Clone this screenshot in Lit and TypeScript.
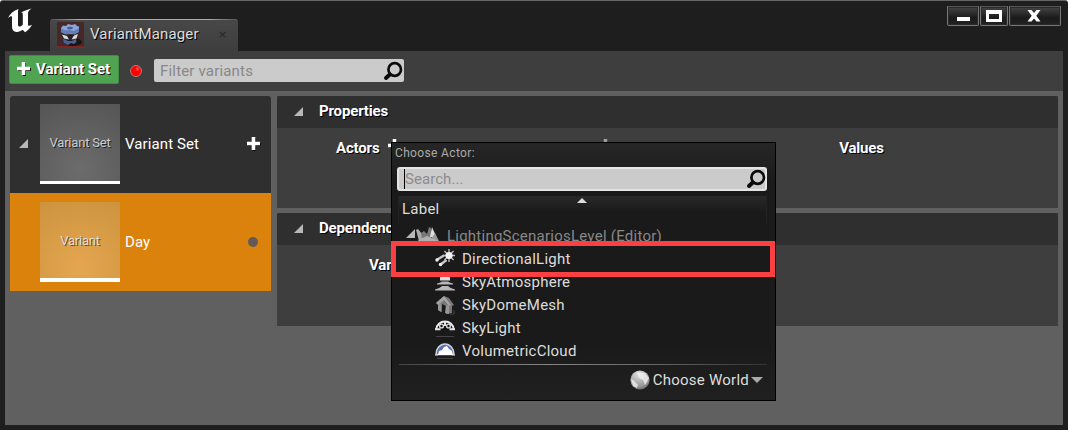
import { LitElement, html, css, svg, nothing } from "lit";
import { customElement, property } from "lit/decorators.js";

const ICONS: Record<string, any> = {
  unreal: svg`<path fill="#fff" d="M0 10C2 5.500 5.500 2.500 10.500 1C10 2.400 10 3.500 10 5V16.500C10 18.200 11 19 12.600 18.400C13.600 17.900 14.600 17.200 14.800 16.500V6.200C14.800 4.600 14 4.200 12.900 4.500C15.600 3 19 1.900 23.500 .5C21.300 2 20 3.500 20 5.200V16.600C20 18.200 21.400 18.200 24 16.800C22.300 20 20 22.200 17 24.300L14.600 21.800C12.500 23.300 10.300 24.300 8.300 24C5.600 23.600 4 22 4 18.500V9.500C4 7.600 2.600 7.600 0 10Z"/>`,
  cube: svg`<rect width="27" height="26" fill="#452828"/><rect y="24" width="27" height="2" fill="#842323"/>
    <ellipse cx="16" cy="20" rx="9" ry="4" fill="#1b1516"/>
    <path d="M4 6 6 3.500 9 4 11 2 15 3 18 2 20 4 22 4.500 22 9 18 12 8 12 4 10Z" fill="#8ba5d6"/><path d="M4 6.500 9 8.500 12 7.500 17 9 22 6 22 10 18 12.500 14 11.500 9 12.500 4 10Z" fill="#607fb9"/>
    <path d="M5 11 9 13 18 13 21 11 20 17 17 19 9 18 6 16Z" fill="#20232d"/><path d="M5 12.500 10 14 12 17.500 7 16.500ZM21 12 17 13.500 14.500 17.500 19.500 16.500Z" fill="#dadbdd"/>
    <path d="M6 17 8 17.500 11 19 15 19 19 17 19.500 20 17 22 14 21 11 23 7 21Z" fill="#4a6291"/><ellipse cx="13" cy="6" rx="3" ry="1.300" fill="#435d91"/>`,
  plus: svg`<path d="M6 1H9V6H14V9H9V14H6V9H1V6H6Z" transform="translate(1 1)" fill="#111"/><path d="M5.700 1H9.300V5.700H14V9.300H9.300V14H5.700V9.300H1V5.700H5.700Z" fill="#fff"/>`,
  search: svg`<circle cx="11.700" cy="8.500" r="6.300" fill="none" stroke="#0b0b0b" stroke-width="2.700"/><path d="M6.800 13.500 3 17" stroke="#0b0b0b" stroke-width="4" stroke-linecap="round"/>`,
  tri: svg`<path d="M9 0V9H0Z" fill="#b8b8b8"/>`,
  min: svg`<rect x="1" y="11" width="13" height="4" fill="#fff"/>`,
  max: svg`<path fill-rule="evenodd" d="M0 4H16V16H0ZM3 8H13V13H3Z" fill="#fff"/>`,
  close: svg`<path d="M1.500 4H5.500L8 7 10.500 4H14.500L10.300 9.800 14.500 15.500H10.500L8 12.500 5.500 15.500H1.500L5.700 9.800Z" fill="#fff"/>`,
  world: svg`<path d="M1 5 3 4 7 9 8 15 4 16Z" fill="#aaa"/><path d="M6 8 9 6 12 9 14 2 16 3 16 15H7Z" fill="#777"/><path d="M17 2 21 11 19 13 15 12Z" fill="#ddd"/><path d="M20 8 24 16H15Z" fill="#999"/><path d="M3 15 12 11 23 16V18H5Z" fill="#b0b0b0"/>`,
  sun: svg`<path d="M14 0V13M7.500 6.500H20.500M9.400 2 18.600 11M18.600 2 9.400 11" stroke="#bbb" stroke-width="1.400"/><circle cx="14" cy="6.500" r="3.600" fill="#f4f4f4"/><path d="M1.500 11 9 6.500M5 16 11.500 11" stroke="#c9c9c9" stroke-width="2.400"/><circle cx="2" cy="11" r="1.700" fill="#eee"/><circle cx="5.500" cy="15.500" r="1.700" fill="#eee"/>`,
  atmosphere: svg`<path d="M5 8.500V6A5 4.500 0 0 1 15 6V8.500Z" fill="#ddd"/><path d="M2 12.500V11.500Q5 11 7 9.500H13Q15 11 18 11.500V12.500ZM0 18.500V17.500Q5 16 7 14H13Q15 16 20 17.500V18.500Z" fill="#b8b8b8"/>`,
  house: svg`<path d="M1 8 9 1 14 3 19 10 17 11V18L11 19V11L7 9V17L3 15V9Z" fill="#777"/><path d="M1 8 9 1 16 10 14 11 9 5 3 10Z" fill="#a4a4a4"/><path d="M3 10 6 8V17L3 15ZM11 10 14 11V19L10 18Z" fill="#969696"/><path d="M19 15V19H15" stroke="#444" fill="none"/>`,
  skylight: svg`<path d="M1 12A9 9 0 0 1 19 12Z" fill="#111"/><path d="M1.500 11A8.500 7.500 0 0 1 18.500 11" fill="none" stroke="#eee" stroke-width="2"/><circle cx="6.500" cy="8" r="1.900" fill="none" stroke="#ddd" stroke-width="1.400"/><circle cx="13.500" cy="8" r="1.900" fill="none" stroke="#ddd" stroke-width="1.400"/><path d="M10 3V8M0 11.300H5.500M14.500 11.300H20" stroke="#e4e4e4" stroke-width="2"/><path d="M1 18.500H19" stroke="#444"/>`,
  cloud: svg`<path d="M1 13.500A9 10.500 0 0 1 19 13.500Z" fill="#566fae" stroke="#ccd1dc" stroke-width="1.600"/><path d="M3 14 4 10 7 9 9 6 12 5 14 8 17 10 18 14Z" fill="#fff"/><path d="M0 14H3M17 14H20" stroke="#ccc"/><path d="M2 17.500H18" stroke="#444"/>`,
  globe: svg`<defs><radialGradient id="g" cx=".4" cy=".2" r=".9"><stop stop-color="#ddd"/><stop offset=".7" stop-color="#999"/><stop offset="1" stop-color="#555"/></radialGradient></defs><circle cx="10" cy="10" r="9.600" fill="url(#g)"/><path d="M1 9Q4 10 5 12L8 15 7 18 3 16ZM7 2 15 3 19 8 17 12 15 15 13 10 9 8Z" fill="#f4f4f4" opacity=".75"/>`,
};

@customElement("ui-icon")
class UiIcon extends LitElement {
  @property() name = "";
  @property({ type: Number }) w = 20;
  @property({ type: Number }) h = 20;
  static styles = css`:host { display: block; flex: none; } svg { display: block; }`;
  render() {
    return html`<svg width=${this.w} height=${this.h} viewBox="0 0 ${this.w} ${this.h}">${ICONS[this.name]}</svg>`;
  }
}

@customElement("app-root")
class AppRoot extends LitElement {
  static styles = css`
    :host { display: block; font: 15px/20px Roboto, "Liberation Sans", sans-serif; color: #fff; letter-spacing: .24px; }
    * { box-sizing: border-box; }
    .window { position: relative; width: 1068px; height: 430px; padding: 0 5px 5px; overflow: hidden; display: flex; flex-direction: column;
      border-top: 1px solid #666; border-radius: 3px 3px 0 0; background: #1e1e1e; }
    .title { height: 50px; display: flex; align-items: flex-start; flex: none; }
    .logo { margin: 7px 0 0 3px; }
    .tab { margin: 18px 0 0 18px; width: 188px; height: 32px; background: linear-gradient(#484848, #3e3e3e); border-radius: 3px 3px 0 0; display: flex; align-items: center; padding-left: 7px; position: relative; }
    .tab::before { content: ""; position: absolute; left: 1px; right: 1px; top: 0; height: 1px; background: linear-gradient(90deg, #5c5730, #c9b628 15%, #c9b628 85%, #5c5730); }
    .tab span { margin: -2px 0 0 6px; color: #ddd; text-shadow: 1px 1px #000; width: 128px; letter-spacing: .15px; }
    .tab i { font: bold 11px/12px "DejaVu Sans", sans-serif; color: #2b2b2b; }
    .winbtns { display: flex; gap: 1px; margin: 5px 2px 0 auto; }
    .wb { height: 20px; border: 1px solid #777; border-top-color: #555; background: linear-gradient(#444, #1b1b1b 60%, #222); display: grid; place-items: center; align-content: center; border-radius: 0 0 2px 2px; box-shadow: inset 0 0 0 1px #2a2a2a; }
    .a { width: 32px; } .b { width: 28px; } .c { width: 52px; padding-right: 3px; }
    .toolbar { height: 40px; background: #3e3e3e; display: flex; align-items: flex-start; padding: 4px; flex: none; }
    .add { width: 110px; height: 29px; background: #50a350; border: 1px solid #438b43; border-radius: 2px; display: flex; align-items: center; padding: 0 0 2px 6px; gap: 4px; font-weight: 700; text-shadow: 1px 1px #111; letter-spacing: -.05px; white-space: nowrap; }
    .rec { width: 12px; height: 12px; border-radius: 50%; background: radial-gradient(circle at 65% 30%, #f66, #f00 25%); border: 1px solid #b77; margin: 10px 0 0 11px; }
    .filter { margin: 4px 0 0 12px; width: 250px; height: 23px; background: #cbcbcb; border-radius: 2px; color: #888; display: flex; align-items: center; justify-content: space-between; padding: 0 1px 0 6px; letter-spacing: .18px; }
    .content { flex: 1; background: #606060; padding: 5px; display: flex; gap: 6px; align-items: flex-start; }
    .left { width: 261px; letter-spacing: .1px; }
    .row { height: 97px; background: #2f2f2f; display: flex; align-items: center; padding: 0 10px 2px 9px; border-radius: 3px 3px 0 0; }
    .row.sel { height: 98px; background: #da820b; border-radius: 0; padding-bottom: 0; }
    .arrow { width: 21px; }
    .thumb { width: 80px; height: 80px; background: radial-gradient(circle at 50% 85%, #6c6c6c, #555); border-bottom: 3px solid #fff; display: grid; place-items: center; font-size: 13px; letter-spacing: -.2px; color: #ccc; text-shadow: 1px 1px #222; margin-right: 5px; padding-top: 2px; }
    .sel .thumb { background: radial-gradient(circle at 50% 85%, #e5a650, #cc933e); color: #ddd; text-shadow: 1px 1px #764b16; border-bottom-width: 4px; }
    .name { flex: 1; }
    .dot { width: 10px; height: 10px; border-radius: 50%; background: #62595a; margin-right: 3px; }
    .right { flex: 1; display: flex; flex-direction: column; gap: 5px; }
    .head { height: 32px; background: #2f2f2f; border-radius: 3px 3px 0 0; display: flex; align-items: center; padding: 0 0 2px 17px; gap: 16px; }
    .sec { background: #3e3e3e; font-weight: 700; letter-spacing: -.16px; text-shadow: 1px 1px #000; height: 112px; }
    .sec.two { height: 113px; }
    .cols { display: grid; grid-template-columns: 196px 192px 1fr; padding-top: 10px; text-align: center; }
    .actors { display: flex; gap: 8px; padding-left: 59px; }
    .sec.two .actors { padding-left: 92px; }
    .dim { opacity: .5; display: grid; place-items: start center; padding-left: 73px; }
    .popup { position: absolute; left: 391px; top: 141px; width: 385px; height: 259px; border: 1px solid #000; background: linear-gradient(#262626, #1a1a1a 40px, #1a1a1a 200px, #202020); padding: 1px 8px 0 5px; color: #ddd; display: flex; flex-direction: column; }
    .choose { font-size: 12px; line-height: 18px; height: 23px; color: #aaa; margin-left: -2px; letter-spacing: .35px; }
    .search { height: 24px; width: 370px; background: #cbcbcb; border: 2px solid #e4e4e4; border-radius: 3px; color: #8b8b8b; display: flex; align-items: center; justify-content: space-between; padding-left: 5px; flex: none; letter-spacing: .05px; }
    .search ui-icon { margin-right: -1px; }
    .caret { border-left: 1px solid #000; }
    .label { margin: 5px 0 0 1px; height: 27px; width: 369px; background: linear-gradient(#292929, #1a1a1a 60%); border: 1px solid #222; border-width: 0 1px; padding: 3px 0 0 3px; position: relative; flex: none; }
    .up { position: absolute; left: 178px; top: 2px; border: 5.500px solid transparent; border-top: 0; border-bottom: 5px solid #ddd; }
    .item { height: 23px; display: flex; align-items: center; gap: 7px; padding-left: 38px; flex: none; }
    .item.level { padding-left: 9px; gap: 0; color: #888; }
    .level ui-icon { margin-top: -4px; }
    .level ui-icon + ui-icon { margin-right: 7px; }
    .list { padding-top: 1px; height: 141px; flex: none; }
    .foot { border-top: 1px solid; border-image: linear-gradient(90deg, #444, #888 40%, #666, #333) 1; margin-left: 2px; display: flex; align-items: center; justify-content: flex-end; gap: 3px; height: 31px; padding-right: 4px; }
    .down { border: 6px solid transparent; border-top-color: #aaa; border-bottom: 0; margin-left: -1px; }
    .mark { position: absolute; left: 391px; top: 240px; width: 384px; height: 36px; border: 5px solid #fc3f43; }
  `;
  private actors = [["sun", "DirectionalLight"], ["atmosphere", "SkyAtmosphere"], ["house", "SkyDomeMesh"], ["skylight", "SkyLight"], ["cloud", "VolumetricCloud"]];
  icon(name: string, w = 20, h = 20) { return html`<ui-icon name=${name} .w=${w} .h=${h}></ui-icon>`; }
  section(title: string, first: string, values: boolean) {
    return html`<section class="sec ${values ? "" : "two"}">
      <div class="head">${this.icon("tri", 9, 9)}<span>${title}</span></div>
      <div class="cols"><div class="actors"><span>${first}</span>${values ? this.icon("plus", 15, 15) : nothing}</div>
        <div class="dim">${values ? this.icon("plus", 15, 15) : nothing}</div><div>${values ? "Values" : nothing}</div></div>
    </section>`;
  }
  render() {
    return html`<div class="window">
      <div class="title"><div class="logo">${this.icon("unreal", 24, 25)}</div>
        <div class="tab">${this.icon("cube", 27, 26)}<span>VariantManager</span><i>×</i></div>
        <div class="winbtns"><div class="wb a">${this.icon("min", 15, 20)}</div><div class="wb b">${this.icon("max", 16, 20)}</div><div class="wb c">${this.icon("close", 16, 20)}</div></div>
      </div>
      <div class="toolbar"><div class="add">${this.icon("plus", 16, 16)}<span>Variant Set</span></div><div class="rec"></div>
        <div class="filter"><span>Filter variants</span>${this.icon("search", 20, 20)}</div></div>
      <div class="content"><div class="left">
          <div class="row"><div class="arrow">${this.icon("tri", 9, 9)}</div><div class="thumb">Variant Set</div><div class="name">Variant Set</div>${this.icon("plus", 15, 15)}</div>
          <div class="row sel"><div class="arrow"></div><div class="thumb">Variant</div><div class="name">Day</div><div class="dot"></div></div>
        </div>
        <div class="right">${this.section("Properties", "Actors", true)}${this.section("Dependencies", "Variant Set", false)}</div>
      </div>
      <div class="popup">
        <div class="choose">Choose Actor:</div>
        <div class="search"><span class="caret">Search...</span>${this.icon("search", 20, 20)}</div>
        <div class="label">Label<div class="up"></div></div>
        <div class="list"><div class="item level">${this.icon("tri", 9, 9)}${this.icon("world", 25, 18)}<span>LightingScenariosLevel (Editor)</span></div>
          ${this.actors.map(([i, n]) => html`<div class="item">${this.icon(i)}<span>${n}</span></div>`)}</div>
        <div class="foot">${this.icon("globe")}<span>Choose World</span><div class="down"></div></div>
      </div>
      <div class="mark"></div>
    </div>`;
  }
}
